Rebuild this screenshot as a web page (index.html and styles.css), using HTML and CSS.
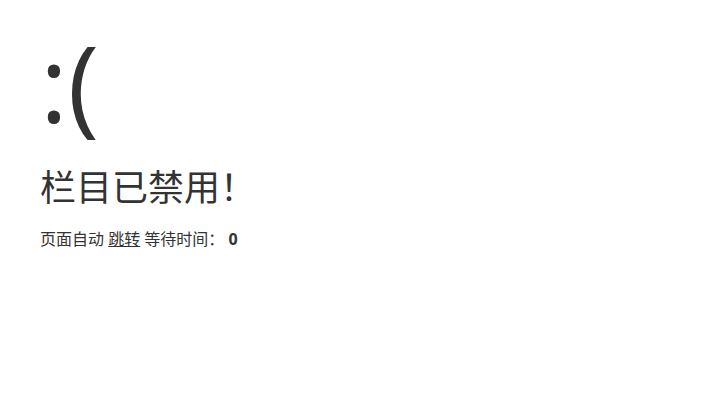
FILE: index.html
```html
<!DOCTYPE html>
<html lang="zh-CN">
<head>
<meta charset="utf-8">
<title>跳转提示</title>
<link rel="stylesheet" href="styles.css">
</head>
<body>
<div class="system-message">
  <h1>:(</h1>
  <p class="error">栏目已禁用！</p>
  <p class="detail"></p>
  <p class="jump">页面自动 <a id="href" href="#">跳转</a> 等待时间： <b id="wait">0</b></p>
</div>
</body>
</html>
```
FILE: styles.css
```css
* { padding: 0; margin: 0; }
body {
  background: #fff;
  font-family: "Open Sans", "Noto Sans CJK SC", sans-serif;
  color: #333;
  font-size: 16px;
}
.system-message { padding: 24px 40px; }
.system-message h1 {
  font-size: 106px;
  font-weight: normal;
  line-height: 116px;
  margin-bottom: 16px;
}
.system-message .error {
  line-height: 1.8em;
  font-size: 36px;
}
.system-message .detail { display: none; }
.system-message .jump { padding-top: 9px; line-height: 18px; }
.system-message .jump a { color: #333; }
```
